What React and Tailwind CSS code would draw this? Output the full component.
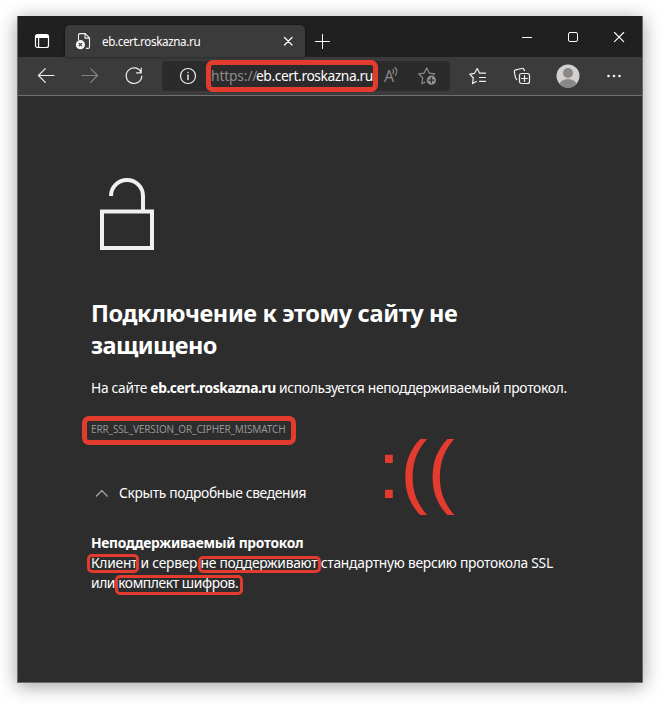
import React from "react";

function Icon({ size = 20, className = "", children }) {
  return (
    <svg
      width={size}
      height={size}
      viewBox={`0 0 ${size} ${size}`}
      fill="none"
      stroke="currentColor"
      strokeWidth="1.2"
      strokeLinecap="round"
      strokeLinejoin="round"
      className={`shrink-0 ${className}`}
    >
      {children}
    </svg>
  );
}

function Cell({ className = "w-11", children }) {
  return <div className={`flex h-full shrink-0 items-center justify-center ${className}`}>{children}</div>;
}

function TabStrip() {
  return (
    <div className="flex h-[41px] shrink-0 bg-[#202020] text-white">
      <div className="flex w-[47px] items-center justify-center pt-2 pl-px">
        <Icon size={16}>
          <rect x="1.5" y="1.5" width="13" height="13" rx="2" />
          <path d="M2 2.5h12v2H2z" fill="currentColor" strokeWidth="1" />
          <path d="M4.6 5v9" />
        </Icon>
      </div>
      <div className="relative mt-[9px] flex w-[240px] items-center rounded-t-[5px] bg-[#3b3b3b] pl-[10px] shadow-[0_0_3px_rgba(0,0,0,0.5)]">
        <svg width="18" height="18" viewBox="0 0 18 18" fill="none" className="shrink-0">
          <path d="M3.5 8V3.2Q3.5 1.6 5 1.6h5.2l4.3 4.3v9q0 1.5-1.5 1.5h-2M10 1.8v4.3h4.3" stroke="#f2f2f2" strokeWidth="1.1" />
          <circle cx="5.4" cy="12.7" r="4.6" fill="#f2f2f2" />
          <path d="m3.9 11.2 3 3m0-3-3 3" stroke="#333" strokeWidth="1.1" />
        </svg>
        <span className="ml-[9px] w-[170px] text-[11.7px] leading-4 tracking-[-0.4px] whitespace-nowrap">eb.cert.roskazna.ru</span>
        <Icon size={16} className="ml-2">
          <path d="m4.5 4.5 7.5 7.5m0-7.5L4.5 12" />
        </Icon>
      </div>
      <div className="flex w-[34px] items-center justify-center pt-2">
        <Icon size={16}>
          <path d="M8.5 1.5v14M1.5 8.5h14" strokeWidth="1" />
        </Icon>
      </div>
      <div className="ml-auto flex">
        <div className="flex w-[46px] items-center justify-center">
          <Icon size={16}><path d="M3.5 8.5h9" strokeWidth="1" /></Icon>
        </div>
        <div className="flex w-[46px] items-center justify-center">
          <Icon size={16}><rect x="3.5" y="3.5" width="9" height="9" rx="1.5" strokeWidth="1" /></Icon>
        </div>
        <div className="flex w-[46px] items-center justify-center">
          <Icon size={16}><path d="m3.5 3.5 9.2 9.2m0-9.2-9.2 9.2" strokeWidth="1.1" /></Icon>
        </div>
      </div>
    </div>
  );
}

function Toolbar() {
  return (
    <div className="flex h-[39px] shrink-0 items-center border-b border-[#707070] bg-[#3b3b3b] pl-[6px] text-[#f0f0f0]">
      <Cell>
        <Icon><path d="M2.5 9.5h15.5M9.3 2.7 2.5 9.5l6.8 6.8" /></Icon>
      </Cell>
      <Cell>
        <Icon className="text-[#838383]"><path d="M2 9.5h15.5M10.7 2.7l6.8 6.8-6.8 6.8" /></Icon>
      </Cell>
      <Cell>
        <Icon><path d="M17 6.2A7.8 7.8 0 1 0 17.8 10M17.2 2.2v4.6h-4.6" /></Icon>
      </Cell>
      <div className="ml-[6px] flex h-[30px] w-[288px] shrink-0 items-center rounded-[4px] bg-[#2b2b2b] pl-4">
        <Icon>
          <circle cx="10" cy="10" r="7.5" />
          <path d="M10 9v4.5M10 6.4v.2" strokeWidth="1.4" />
        </Icon>
        <div className="ml-[13px] flex w-[170px] text-[13.8px] leading-5 whitespace-nowrap">
          <span className="w-[45px] tracking-[-0.15px] text-[#8d8d8d]">https://</span>
          <span className="tracking-[-0.42px] text-white">eb.cert.roskazna.ru</span>
        </div>
        <div className="ml-[3px] flex w-[18px] items-start text-[#8d8d8d]">
          <span className="font-['Open_Sans',sans-serif] text-[16px] leading-5 font-normal">A</span>
          <svg width="8" height="11" viewBox="0 0 8 11" fill="none" stroke="currentColor" strokeWidth="1.1" strokeLinecap="round" className="-ml-0.5 shrink-0">
            <path d="M.8 3.6q1.7 1.7.2 4M3 1.5q3.6 3.5.4 8" />
          </svg>
        </div>
        <Icon className="ml-[15px] text-[#8d8d8d]">
          <path d="M8 16.2 4.9 17.8 5.7 12 1.7 7.9l5.5-.8L9.7 2l2.5 5.1 5.5.8-1 1" />
          <circle cx="14.4" cy="14.2" r="4.6" fill="currentColor" stroke="none" />
          <path d="M14.4 11.8v4.8M12 14.2h4.8" stroke="#2b2b2b" />
        </Icon>
      </div>
      <Cell className="ml-[6px] w-11">
        <Icon>
          <path d="M8.3 15.4 4.5 17.6 5.3 12 1.8 8.1l4.7-.8L9.2 2.5l2.4 4.7h6M11.5 11.5h6M11.5 15.3h6" />
        </Icon>
      </Cell>
      <Cell>
        <Icon>
          <rect x="7.5" y="7.5" width="10" height="10" rx="2" />
          <path d="M12.5 9.7v5.6M9.7 12.5h5.6M4.8 13.5Q3.8 12.8 3.5 11.7L2.3 6Q2 4.3 3.7 3.9l6.2-1.4q1.7-.3 2.4 1.5l.2.7" />
        </Icon>
      </Cell>
      <Cell className="w-12">
        <svg width="24" height="24" viewBox="0 0 24 24">
          <defs><clipPath id="avatar"><circle cx="12" cy="12" r="11.5" /></clipPath></defs>
          <g clipPath="url(#avatar)">
            <path fill="#d2d0ce" d="M0 0h24v24H0z" />
            <circle cx="12" cy="9" r="5" fill="#8a8886" />
            <ellipse cx="12" cy="21" rx="8.5" ry="6" fill="#8a8886" />
          </g>
        </svg>
      </Cell>
      <Cell>
        <Icon>
          <path d="M4.5 10h.01M10 10h.01M15.5 10h.01" strokeWidth="2.7" />
        </Icon>
      </Cell>
    </div>
  );
}

function ErrorPage() {
  return (
    <div className="flex flex-1 flex-col pt-[80px] pl-[73px] text-[13.8px] leading-5 whitespace-nowrap text-white">
      <svg width="72" height="76" viewBox="0 0 72 76" fill="none" stroke="#f0f0f0" strokeWidth="4">
        <path d="M11 35.5h50v36.5H11zM20 20a16 16 0 0 1 32 0v15" />
      </svg>
      <h1 className="mt-[45px] text-[23.5px] leading-8 font-bold">
        <span className="tracking-[-0.37px]">Подключение к этому сайту не</span>
        <br />
        <span className="tracking-[-0.6px]">защищено</span>
      </h1>
      <p className="mt-[17px] tracking-[-0.3px]">
        На сайте <b className="tracking-[-0.43px]">eb.cert.roskazna.ru</b> используется неподдерживаемый протокол.
      </p>
      <p className="mt-[21px] text-[10px] tracking-[-0.14px] text-[#949494]">ERR_SSL_VERSION_OR_CIPHER_MISMATCH</p>
      <div className="mt-[44px] flex items-center">
        <svg width="20" height="12" viewBox="0 0 20 12" fill="none" stroke="#b0b0b0" strokeWidth="1.1">
          <path d="m5 9.5 5.8-6 5.8 6" />
        </svg>
        <span className="ml-2 tracking-[-0.33px]">Скрыть подробные сведения</span>
      </div>
      <p className="mt-[30px] font-bold tracking-[-0.28px]">Неподдерживаемый протокол</p>
      <p className="tracking-[-0.25px]">Клиент и сервер не поддерживают стандартную версию протокола SSL</p>
      <p className="tracking-[-0.4px]">или комплект шифров.</p>
    </div>
  );
}

function Annotations() {
  return (
    <div className="pointer-events-none absolute inset-0">
      <div className="absolute top-[60px] left-[206px] h-[32px] w-[172px] rounded-[7px] border-[5px] border-[#e43b2f]" />
      <div className="absolute top-[416px] left-[82px] h-[29px] w-[214px] rounded-[7px] border-[5px] border-[#e43b2f]" />
      <div className="absolute top-[554px] left-[87px] h-[19px] w-[52px] rounded-[5px] border-[3px] border-[#e43b2f]" />
      <div className="absolute top-[556px] left-[198px] h-[17px] w-[123px] rounded-[5px] border-[3px] border-[#e43b2f]" />
      <div className="absolute top-[575px] left-[115px] h-[20px] w-[128px] rounded-[5px] border-[3px] border-[#e43b2f]" />
      <span className="absolute top-[423px] left-[377.5px] font-['Liberation_Sans',sans-serif] text-[82px] leading-[94px] text-[#e43b2f]">:((</span>
    </div>
  );
}

export default function App() {
  return (
    <div className="relative h-[705px] w-[664px] overflow-hidden bg-white px-[17px] pt-4 font-['Noto_Sans','Open_Sans',sans-serif]">
      <div className="flex h-[667px] w-[626px] flex-col border-x border-b border-[#6b6b6b] bg-[#2d2d2d] shadow-[0_3px_18px_rgba(0,0,0,0.38)]">
        <TabStrip />
        <Toolbar />
        <ErrorPage />
      </div>
      <Annotations />
    </div>
  );
}
